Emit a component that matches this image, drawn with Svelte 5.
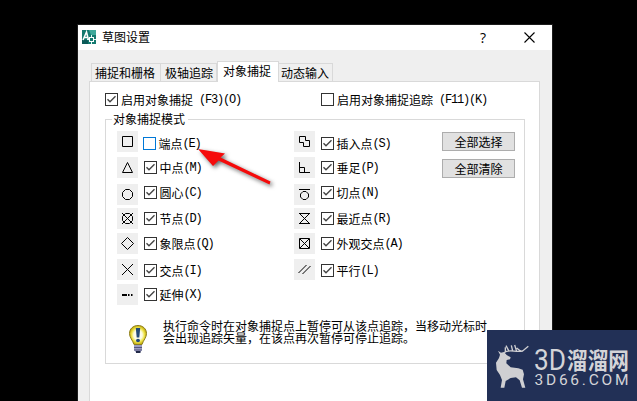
<script>
  const left = [
    ['square', '端点', '(E)', false],
    ['triangle', '中点', '(M)', true],
    ['circle', '圆心', '(C)', true],
    ['node', '节点', '(D)', true],
    ['diamond', '象限点', '(Q)', true],
    ['cross', '交点', '(I)', true],
    ['extension', '延伸', '(X)', true]
  ];
  const right = [
    ['insert', '插入点', '(S)', true],
    ['perpendicular', '垂足', '(P)', true],
    ['tangent', '切点', '(N)', true],
    ['nearest', '最近点', '(R)', true],
    ['apparent', '外观交点', '(A)', true],
    ['parallel', '平行', '(L)', true]
  ];
  const groups = [left, right];

  const glyphs = {
    square: 'M5.5 5.5h10v10h-10z',
    triangle: 'M10.5 5.5L15.5 15.5H5.5z',
    circle: 'M8.5 5.5h4l3 3v4l-3 3h-4l-3-3v-4z',
    node: 'M8.5 5.5h4l3 3v4l-3 3h-4l-3-3v-4zM5 5l11 11M16 5L5 16',
    diamond: 'M10.5 4.5l6 6-6 6-6-6z',
    cross: 'M5 5l11 11M16 5L5 16',
    extension: 'M5 11h5M11 11h1.5M14 11h1.5',
    insert: 'M5.5 5.5h6v4h4v6h-6v-4h-4z',
    perpendicular: 'M5.5 5v10.500H16M5.5 10.500h5v5',
    tangent: 'M5 5.500h11M9 7.500h3l2.500 2.500v3l-2.500 2.500h-3l-2.500-2.500v-3z',
    nearest: 'M5 5.500h11M5 15.500h11M6 6l9 9M15 6l-9 9',
    apparent: 'M5.500 5.500h10v10h-10zM6 6l9 9M15 6l-9 9',
    parallel: 'M4.500 14l8-8M8.500 15l8-8'
  };
  const tabs = ['捕捉和栅格', '极轴追踪', '对象捕捉', '动态输入'];
</script>

{#snippet check(label, key, on)}
  <label class="check" class:focus={key === '(E)'}>
    <svg class="box" width="13" height="13" viewBox="0 0 13 13">
      <rect class="frame" x=".5" y=".5" width="12" height="12" />
      {#if on}<path class="tick" d="M2.500 6.300L5 8.800L10.500 3.300" />{/if}
    </svg>
    <span>{label}</span><span class="key">{key}</span>
  </label>
{/snippet}

<div class="stage">
  <section class="dialog">
    <header>
      <svg class="app" width="15" height="15" viewBox="0 0 15 15">
        <rect width="14" height="14" fill="#14796f" />
        <path d="M7 0h7v5H9z" fill="#3fa99b" />
        <path d="M0 10h6v4H0z" fill="#0b5a58" />
        <path d="M1 10L4.500 2l2 8M2.500 7.500h3" fill="none" stroke="#fff" stroke-width="1.500" />
        <path d="M9.500 5v9M5 9.500h9" stroke="#e4fffb" />
        <rect x="7.500" y="7.500" width="4" height="4" fill="#14796f" stroke="#fff" />
      </svg>
      <h1>草图设置</h1>
      <span class="help">?</span>
      <svg class="close" width="11" height="11" viewBox="0 0 11 11"><path d="M.5 .5l10 10M10.500 .5l-10 10" /></svg>
    </header>

    <nav>
      {#each tabs as tab, i}
        <div class="tab" class:active={i === 2}>{tab}</div>
      {/each}
    </nav>

    <main>
      <div class="toggles">
        {@render check('启用对象捕捉', ' (F3)(O)', true)}
        {@render check('启用对象捕捉追踪', ' (F11)(K)', false)}
      </div>

      <div class="group">
        <div class="legend"><i class="lead"></i><span>对象捕捉模式</span><i class="rest"></i></div>
        <div class="body">
          <div class="modes">
            {#each groups as items}
              <div class="set">
                <div class="icons">
                  {#each items as [icon]}
                    <svg class={icon} width="21" height="21" viewBox="0 0 21 21"><path d={glyphs[icon]} /></svg>
                  {/each}
                </div>
                <div class="checks">
                  {#each items as [, label, key, on]}
                    {@render check(label, key, on)}
                  {/each}
                </div>
              </div>
            {/each}
            <div class="buttons">
              <button>全部选择</button>
              <button>全部清除</button>
            </div>
          </div>
          <div class="tip">
            <svg width="20" height="30" viewBox="0 0 20 30">
              <defs>
                <radialGradient id="glass">
                  <stop offset="0" stop-color="#fff" />
                  <stop offset=".5" stop-color="#fbfbe0" />
                  <stop offset=".75" stop-color="#efe44a" />
                  <stop offset="1" stop-color="#c3ad10" />
                </radialGradient>
              </defs>
              <path d="M10 1.500C5 1.500 1.500 5 1.500 9.500c0 4 3 6.500 4.500 11h8c1.500-4.500 4.500-7 4.500-11C18.500 5 15 1.500 10 1.500z" fill="url(#glass)" stroke="#8e7f1c" />
              <path d="M7.800 4h4.400l-.9 9.500H8.700z" fill="#234a78" />
              <ellipse cx="10" cy="16.500" rx="2" ry="1.700" fill="#234a78" />
              <path d="M6 21h8v5l-2 2.500H8L6 26z" fill="#9b9cc2" />
              <path d="M6 23.500h8M6 26h8" stroke="#55567c" />
              <path d="M8 28h4.500" stroke="#111a38" stroke-width="1.800" />
            </svg>
            <p>执行命令时在对象捕捉点上暂停可从该点追踪，当移动光标时<br />会出现追踪矢量，在该点再次暂停可停止追踪。</p>
          </div>
        </div>
      </div>
    </main>
  </section>

  <svg class="arrow" width="90" height="54" viewBox="190 140 90 54">
    <path d="M198 149L225 153.500L220.500 157.500L270.500 181.500L269.500 184.500L218.500 160.500L213 166z" />
  </svg>

  <svg class="mark" width="150" height="71" viewBox="487 330 150 71">
    <rect x="487" y="330" width="150" height="71" fill="#223056" />
    <g transform="translate(480 320) scale(.3333)">
      <path fill="#cfcfd2" d="M54 92L63 98L72 96L80 105L92 112L90 118L80 120L79 130L92 142L115 145L128 149L132 163L129 178L136 203L126 203L119 181L108 172L92 174L77 183L73 203L62 203L66 180L60 165L50 150L48 128L57 114L60 104z" />
      <path d="M72 98C85 86 108 98 128 93L145 79M76 95L76 82M86 92L78 77M98 93L94 76M110 94L104 75M122 94L110 84" fill="none" stroke="#cfcfd2" stroke-width="4" />
    </g>
    <g fill="#d4d4d8">
      <text class="brand" x="534" y="370" font-size="30" textLength="32" lengthAdjust="spacingAndGlyphs">3D</text>
      <text class="brand bold" x="567" y="368.500" font-size="23" textLength="62" lengthAdjust="spacingAndGlyphs">溜溜网</text>
      <text class="brand" x="534.500" y="385" font-size="15.500" textLength="94" lengthAdjust="spacing">3D66.COM</text>
    </g>
  </svg>
</div>

<style>
  .stage {
    position: relative;
    width: 637px;
    height: 401px;
    overflow: hidden;
    box-sizing: border-box;
    padding: 25px 0 0 78px;
    background: #000;
    color: #000;
    font: 12px/14px "Noto Sans CJK SC", sans-serif;
  }
  .dialog {
    width: 474px;
    height: 400px;
    background: #efefef;
    box-shadow: 0 0 0 1px #1c1c1c;
  }
  header {
    display: flex;
    align-items: center;
    height: 25px;
    background: #fff;
  }
  .app { margin: 0 5px 0 4px; }
  h1 { margin: 0; padding-bottom: 2px; width: 304px; font-size: 12px; font-weight: 400; }
  .help { box-sizing: border-box; width: 118px; padding-left: 74px; font: 14px/14px "Open Sans", sans-serif; }
  .close { fill: none; stroke: #000; stroke-width: 1.1; }
  nav {
    display: flex;
    align-items: flex-end;
    height: 31px;
    padding-left: 13px;
  }
  .tab {
    box-sizing: border-box;
    height: 18px;
    padding: 0 4px;
    border: 1px solid #d9d9d9;
    border-bottom: 0;
    line-height: 17px;
    white-space: nowrap;
    width: 57px;
  }
  .tab:first-child { width: 69px; padding: 0 3px; border-right: 0; }
  .tab:last-child { width: 54px; border-left: 0; padding: 0 2px; }
  .tab.active {
    width: 62px;
    height: 21px;
    margin-bottom: -1px;
    padding: 0 5px;
    background: #fff;
    line-height: 18px;
    z-index: 1;
  }
  main {
    box-sizing: border-box;
    width: 451px;
    height: 340px;
    margin-left: 11px;
    padding: 11px 14px 0 15px;
    border: 1px solid #d9d9d9;
    background: #fff;
  }
  .toggles { display: flex; }
  .toggles .check:first-child { width: 216px; }
  .check {
    display: flex;
    align-items: center;
    height: 13px;
    white-space: pre;
  }
  .box { margin-right: 3px; flex: none; }
  .checks .box { margin-right: 2.5px; }
  .frame { fill: #fff; stroke: #333; }
  .tick { fill: none; stroke: #444; stroke-width: 1.400; }
  .focus { margin-left: -1px; }
  .set + .set .focus { margin-left: 0; }
  .focus .frame { stroke: #0078d7; }
  .key {
    font-family: "Liberation Mono", monospace;
    font-size: 12px;
    letter-spacing: -1.2px;
  }
  .group { margin-top: 5px; width: 420px; }
  .legend { display: flex; align-items: center; height: 15px; }
  .legend span { width: 75px; padding-left: 1px; }
  .legend i { height: 7px; margin-top: 8px; box-sizing: border-box; border-top: 1px solid #d9d9d9; }
  .lead { width: 7px; border-left: 1px solid #d9d9d9; }
  .rest { flex: 1; border-right: 1px solid #d9d9d9; }
  .body {
    box-sizing: border-box;
    height: 238px;
    padding: 5px 8px 0 11px;
    border: 1px solid #d9d9d9;
    border-top: 0;
  }
  .modes { display: flex; }
  .set { display: flex; width: 177px; }
  .set + .set { width: 148px; }
  .icons {
    display: grid;
    grid-template-rows: 26px 27px 24px 25px 26px 25px 21px;
    height: 174px;
    width: 27px;
  }
  .icons svg { background: #efefef; fill: none; stroke: #000; }
  .icons .extension { stroke-width: 2; }
  .checks {
    display: grid;
    grid-template-rows: 24px 25px 26px 25px 27px 24px 13px;
    height: 164px;
    padding-top: 6px;
  }
  .buttons { display: flex; flex-direction: column; gap: 8px; padding-top: 1px; }
  button {
    box-sizing: border-box;
    width: 73px;
    height: 19px;
    padding: 0;
    border: 1px solid #adadad;
    background: #e1e1e1;
    color: #000;
    font: inherit;
    line-height: 16px;
  }
  .tip { display: flex; align-items: flex-start; padding: 19px 0 0 11px; }
  .tip p { margin: -4px 0 0 15px; line-height: 12px; white-space: nowrap; }
  .arrow {
    position: absolute;
    left: 190px;
    top: 140px;
    overflow: visible;
    fill: #f50a0a;
    filter: drop-shadow(2px 2px 2px rgba(0, 0, 0, .6));
  }
  .mark { position: absolute; left: 487px; top: 330px; }
  .brand { font-family: "Roboto", "Noto Sans CJK SC", sans-serif; }
  .bold { font-family: "Noto Sans CJK SC", sans-serif; font-weight: 700; }
</style>
